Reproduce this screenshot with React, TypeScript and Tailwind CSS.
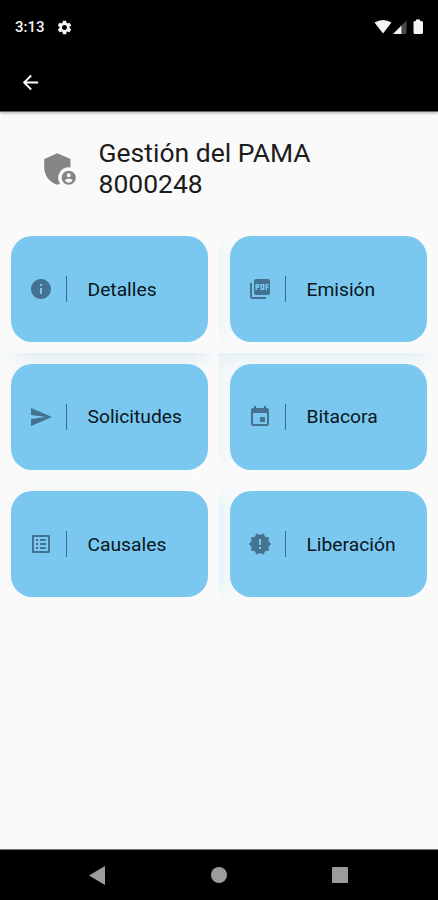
import type { IconType } from "react-icons"
import {
    MdAdminPanelSettings,
    MdArrowBack,
    MdEvent,
    MdInfo,
    MdListAlt,
    MdNewReleases,
    MdPictureAsPdf,
    MdSend,
    MdSettings,
} from "react-icons/md"

interface MenuCardProps {
    label: string
    icon: IconType
    glow: string
}

const menuItems: MenuCardProps[] = [
    { label: "Detalles", icon: MdInfo, glow: "" },
    {
        label: "Emisión",
        icon: MdPictureAsPdf,
        glow: "bg-[linear-gradient(to_bottom,#fafafa,#fafafa00_30px,#fafafa00_98px,#fafafa),linear-gradient(to_right,#edf6fa,#fafafa_18px)]",
    },
    {
        label: "Solicitudes",
        icon: MdSend,
        glow: "bg-[linear-gradient(to_right,#fafafa,#fafafa00_30px,#fafafa00_189px,#fafafa),linear-gradient(to_bottom,#e3eff4,#fafafa_18px)]",
    },
    {
        label: "Bitacora",
        icon: MdEvent,
        glow: "bg-[linear-gradient(to_left,#fafafa,#fafafa00_30px),linear-gradient(to_top,#fafafa,#fafafa00_30px),linear-gradient(to_bottom,#e6f1f5,#fafafa00_18px),linear-gradient(to_right,#eff7fa,#fafafa_18px)]",
    },
    {
        label: "Causales",
        icon: MdListAlt,
        glow: "bg-[linear-gradient(to_right,#fafafa,#fafafa00_30px,#fafafa00_189px,#fafafa),linear-gradient(to_bottom,#f5f8f9,#fafafa_15px)]",
    },
    {
        label: "Liberación",
        icon: MdNewReleases,
        glow: "bg-[linear-gradient(to_bottom,#fafafa,#fafafa00_30px,#fafafa00_98px,#fafafa),linear-gradient(to_right,#e6f4fa,#fafafa_18px)]",
    },
]

const StatusBar = () => (
    <div className="flex h-[54px] items-center justify-between pl-[15px] pr-3 text-[#f5f5f5]">
        <div className="flex items-center gap-[11px]">
            <span className="text-[15px] font-medium leading-none">3:13</span>
            <MdSettings className="size-[17px]" />
        </div>
        <svg className="h-4 w-[52px]" viewBox="0 0 52 16" fill="currentColor">
            <path d="M.5 3.5Q9 -1.5 17.500 3.500L9 14.500Z" />
            <path d="M19 15L27.500 6.500V15Z" />
            <path d="M27.500 6.500L32.500 1.500V15H27.500Z" opacity=".3" />
            <path d="M40.500 2H42V.5H46V2H47.500Q49 2 49 3.500V13.500Q49 15 47.500 15H41Q39.500 15 39.500 13.500V3.500Q39.500 2 40.500 2Z" />
        </svg>
    </div>
)

const MenuCard: React.FC<MenuCardProps> = ({ label, icon: Icon, glow }) => (
    <div className={`h-[127.700px] p-[11px] ${glow}`}>
        <button className="flex h-[106px] w-full items-center rounded-[21px] bg-[#7ac8ef] pl-[18px] text-left">
            <Icon className="size-6 text-[#437390]" />
            <span className="ml-[13px] h-[26px] w-px bg-[#3d6c86]" />
            <span className="ml-[20.500px] pt-[2px] text-[19.250px] text-[#0b161c]">{label}</span>
        </button>
    </div>
)

const NavigationBar = () => (
    <div className="flex h-[51px] items-center justify-between border-t border-[#777] bg-black pl-[89px] pr-[90px]">
        <svg className="h-[19px] w-4" viewBox="0 0 16 19" fill="#9c9c9c">
            <path d="M0 9.500L16 0V19Z" />
        </svg>
        <div className="size-4 rounded-full bg-[#9c9c9c]" />
        <div className="size-4 rounded-[1px] bg-[#9c9c9c]" />
    </div>
)

const App = () => {
    return (
        <div className="flex h-[900px] w-[438px] flex-col overflow-hidden bg-[#fafafa] font-[Roboto,sans-serif]">
            <header className="h-[112px] shrink-0 border-b border-[#666] bg-black text-white shadow-[0_1px_3px_#00000050]">
                <StatusBar />
                <div className="flex h-14 items-center pl-[19px]">
                    <MdArrowBack className="size-[23px]" />
                </div>
            </header>

            <div className="flex h-[113px] shrink-0 items-center pb-px pl-[39px]">
                <MdAdminPanelSettings className="mt-[2px] size-[42px] text-[#858585]" />
                <h1 className="ml-[17.500px] w-[240px] text-[26.500px] leading-[31px] text-[#1c1c1c]">
                    Gestión del PAMA 8000248
                </h1>
            </div>

            <main className="grid flex-1 grid-cols-2 content-start">
                {menuItems.map((item) => (
                    <MenuCard key={item.label} {...item} />
                ))}
            </main>

            <NavigationBar />
        </div>
    )
}

export default App
